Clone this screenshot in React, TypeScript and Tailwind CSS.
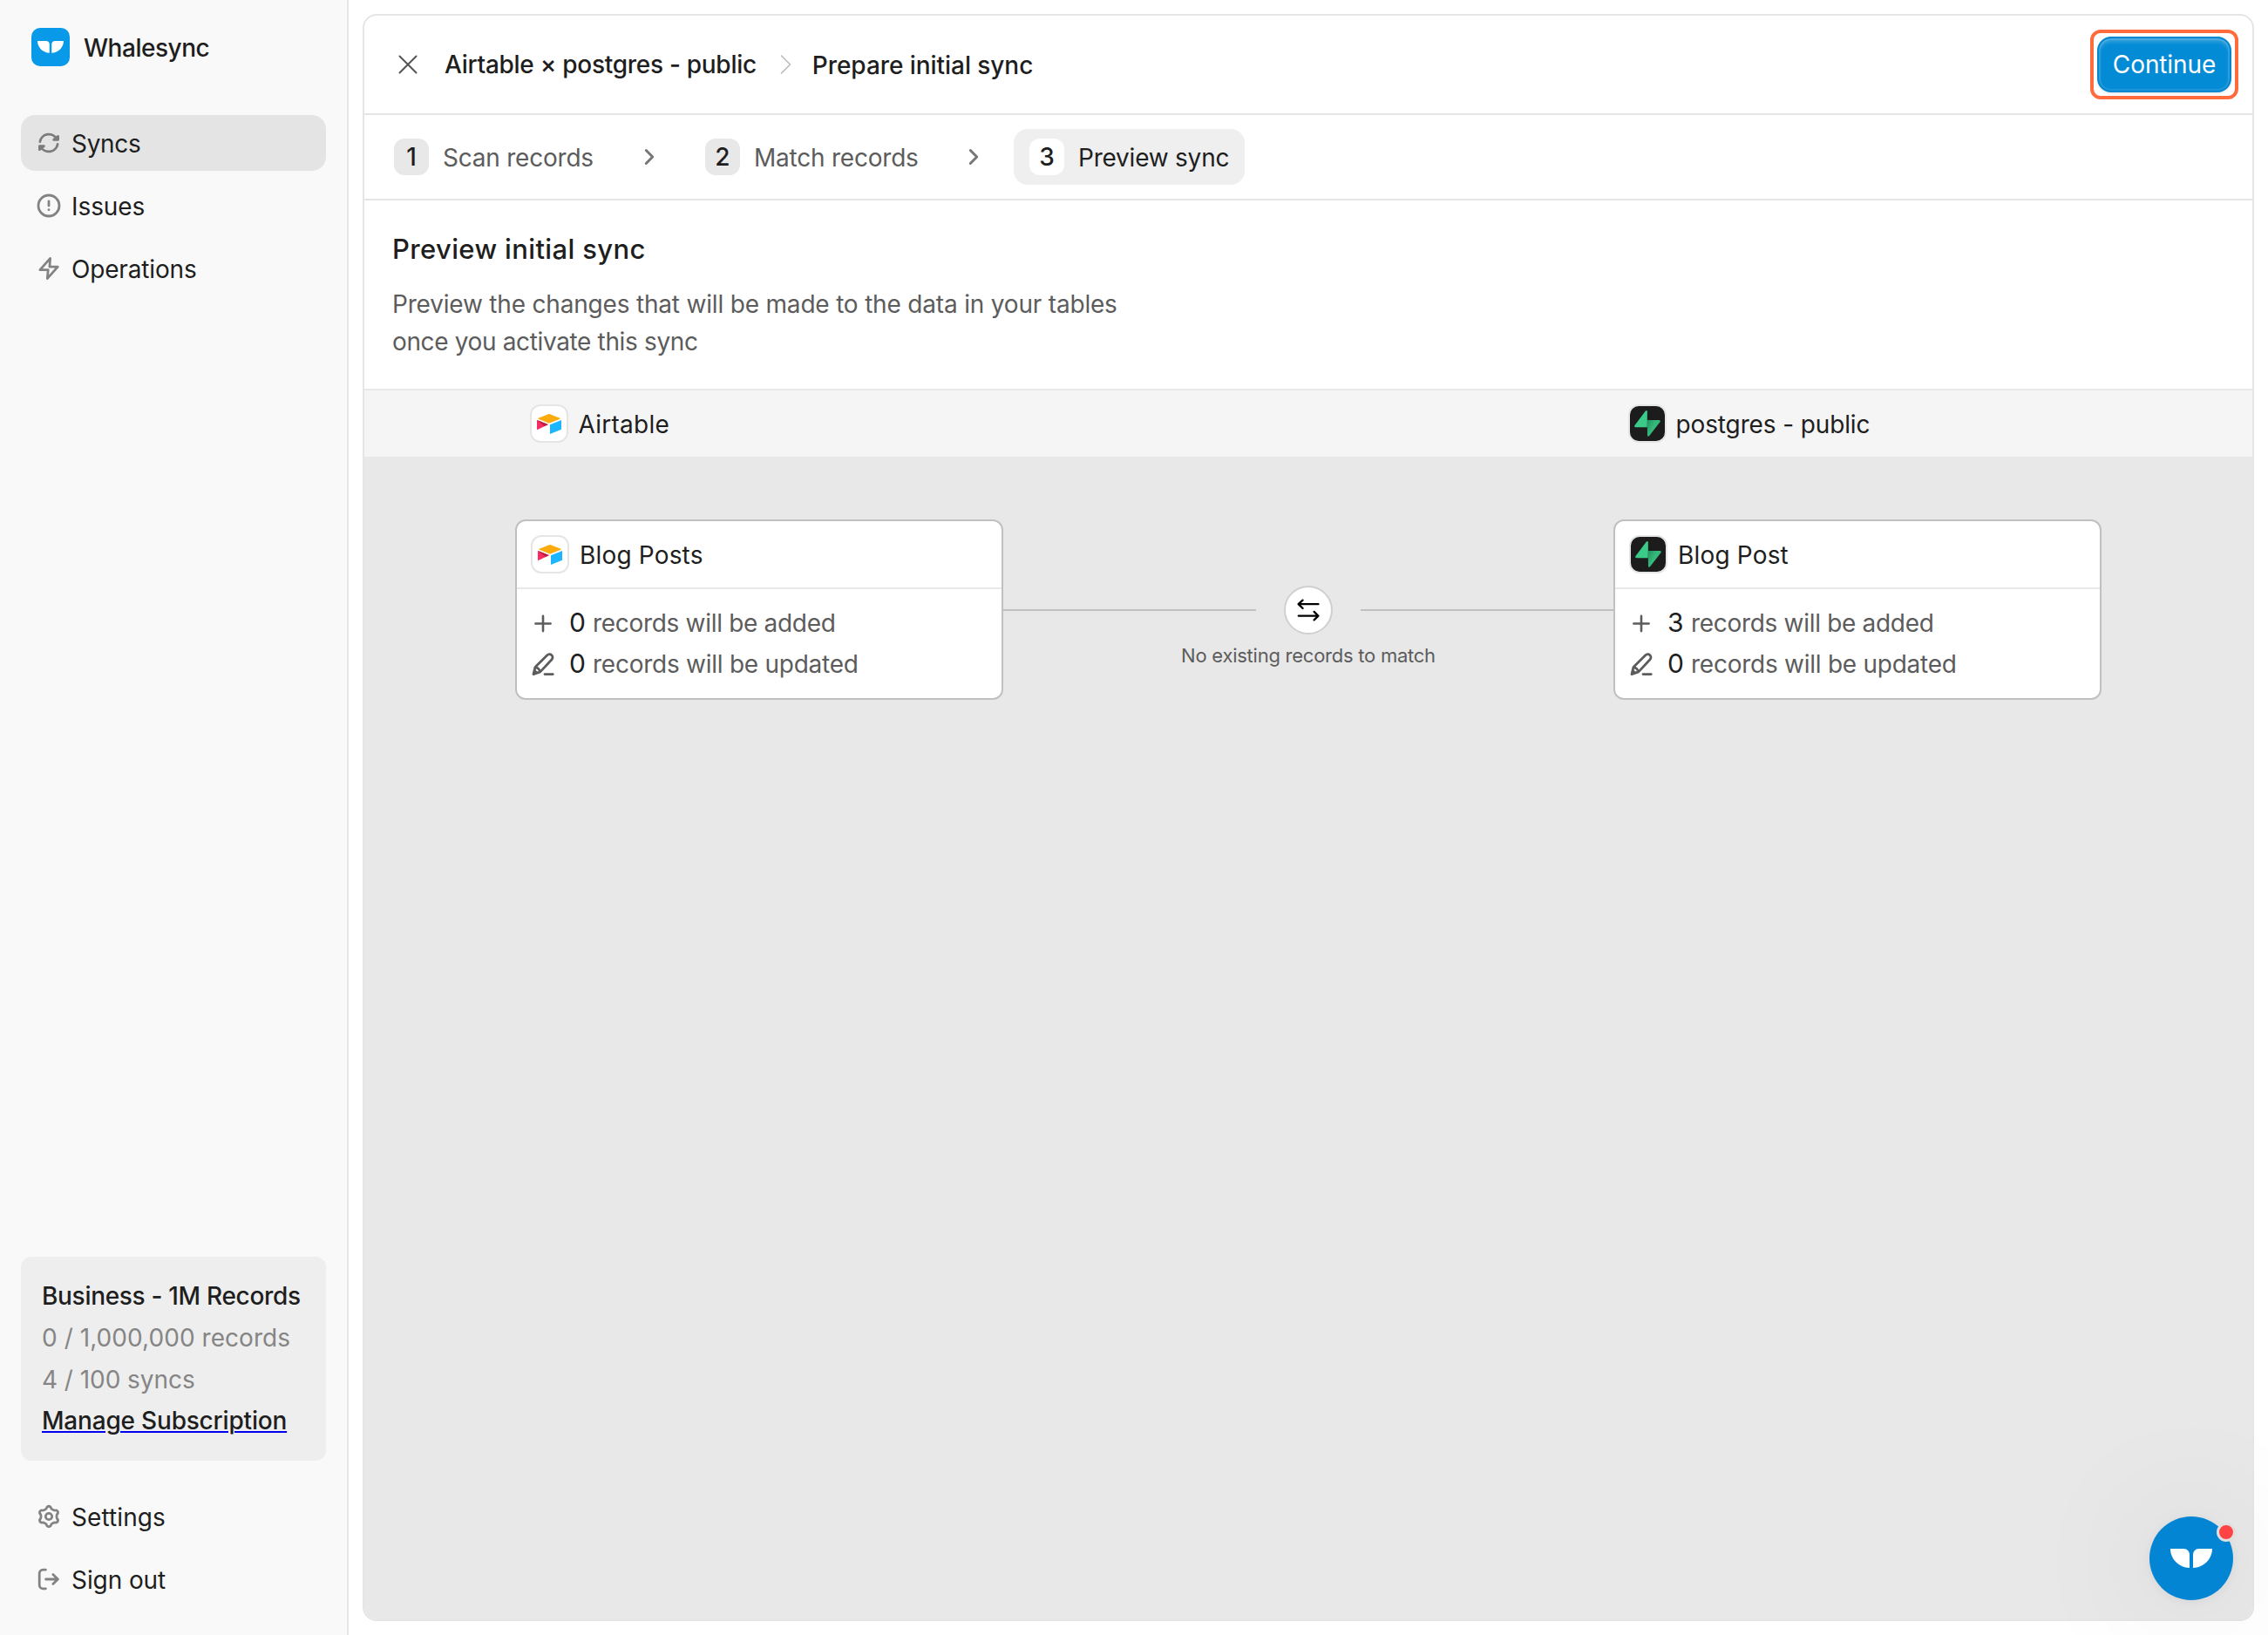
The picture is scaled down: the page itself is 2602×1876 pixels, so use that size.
import type { ReactNode } from "react";

function Icon({ children, className = "size-7", box = "0 0 28 28" }: { children: ReactNode; className?: string; box?: string }) {
  return (
    <svg viewBox={box} className={`shrink-0 ${className}`} fill="none" stroke="currentColor" strokeWidth={2.8} strokeLinecap="round" strokeLinejoin="round">
      {children}
    </svg>
  );
}

const gearPath = (() => {
  const at = (deg: number, r: number) => {
    const a = (deg * Math.PI) / 180;
    return `${(14 + r * Math.sin(a)).toFixed(2)} ${(14 - r * Math.cos(a)).toFixed(2)}`;
  };
  let d = `M${at(-30, 9)}`;
  for (let k = 0; k < 6; k++) {
    const c = k * 60;
    d += `Q${at(c - 16, 9)} ${at(c - 11, 11)}Q${at(c, 12.6)} ${at(c + 11, 11)}Q${at(c + 16, 9)} ${at(c + 30, 9)}`;
  }
  return d + "Z";
})();

const SyncIcon = () => (
  <Icon>
    <path d="M3.9 12.6A10.3 10.3 0 0 1 23.2 9.6M24.6 6.4v3.9h-5z" />
    <path d="M24.1 15.4A10.3 10.3 0 0 1 4.8 18.4M3.4 21.6v-3.9h5z" />
  </Icon>
);
const IssueIcon = () => (
  <Icon>
    <circle cx="14" cy="14" r="12" />
    <path d="M14 9v5M14 18.6v.1" />
  </Icon>
);
const FlashIcon = () => (
  <Icon>
    <path d="M15.6 2.4 3.9 15.6h9.3l-.9 10L24.3 12.1h-9.4z" />
  </Icon>
);
const GearIcon = () => (
  <Icon>
    <path d={gearPath} />
    <circle cx="14" cy="14" r="3.7" />
  </Icon>
);
const SignOutIcon = () => (
  <Icon>
    <path d="M10.4 3.2H7.2a4 4 0 0 0-4 4v13.6a4 4 0 0 0 4 4h3.2M10.6 14H24.4M18.8 8.6l5.6 5.4-5.6 5.4" />
  </Icon>
);
const Tail = ({ className }: { className: string }) => (
  <svg viewBox="0 0 48 22" className={className} fill="white">
    <path d="M0 0H15.5A6.5 6.5 0 0 1 22 6.500V22C10 21.800 0 12 0 0Z" />
    <path d="M48 0H32.500A6.500 6.500 0 0 0 26 6.500V22C38 21.800 48 12 48 0Z" />
  </svg>
);

function AirtableLogo() {
  return (
    <div className="size-11 shrink-0 rounded-xl border-2 border-[#e5e5e5] bg-white">
      <svg viewBox="2 2 40 40" className="size-10">
        <path d="M9.600 15.700 21 11.200a2.500 2.500 0 0 1 2 0l11.400 4.500q.8.500 0 1L23 21.200a2.500 2.500 0 0 1-2 0L9.600 16.700q-.8-.5 0-1Z" fill="#fcab0e" />
        <path d="M23 23.300 36 18v10.700L23 34Z" fill="#1bb6ff" />
        <path d="M8 18v11.200L20.800 23.300Z" fill="#f82b60" />
        <path d="M8 17.800 21 23.100 16.800 25.100Z" fill="#ba1e45" />
      </svg>
    </div>
  );
}

function SupabaseLogo() {
  return (
    <div className="size-11 shrink-0 rounded-xl border-2 border-[#e5e5e5] bg-[#e5e5e5]">
      <div className="size-10 overflow-hidden rounded-[10px] bg-[#1c1c1c]">
        <svg viewBox="0 0 40 40" className="size-10">
          <defs>
            <linearGradient id="bolt" x1="20" y1="17" x2="28" y2="21" gradientUnits="userSpaceOnUse">
              <stop stopColor="#249361" />
              <stop offset="1" stopColor="#34b97b" />
            </linearGradient>
          </defs>
          <path d="M19.700 16H33.600q1.900.3 1 2L22.200 34.100q-1.700 1.600-2.200-.4Z" fill="url(#bolt)" />
          <path d="M19.700 24.200H6.500q-2.100-.4-1-2.200L17.900 5.500q1.500-1.400 2 .4Z" fill="#3bcb88" />
        </svg>
      </div>
    </div>
  );
}

function NavItem({ icon, label, active, tracking }: { icon: ReactNode; label: string; active?: boolean; tracking: string }) {
  return (
    <div className={`flex h-16 items-center gap-3 rounded-2xl pl-[18px] ${active ? "bg-[#e4e4e4] text-[#7b7b7b]" : "text-[#838383]"}`}>
      {icon}
      <span className={`pt-px text-[#1e1e1e] ${tracking}`}>{label}</span>
    </div>
  );
}

function Sidebar() {
  return (
    <aside className="flex w-[400px] shrink-0 flex-col border-r-2 border-[#e5e5e5] bg-[#f9f9f9] px-6 py-8">
      <div className="flex items-center gap-4 pl-3">
        <div className="flex size-11 items-center justify-center rounded-[10px] bg-[#0899e8]">
          <Tail className="w-[30px]" />
        </div>
        <span className="pt-0.5 font-medium tracking-[-0.017em]">Whalesync</span>
      </div>
      <nav className="mt-14 flex flex-col gap-2">
        <NavItem icon={<SyncIcon />} label="Syncs" active tracking="tracking-[-0.011em]" />
        <NavItem icon={<IssueIcon />} label="Issues" tracking="tracking-[-0.003em]" />
        <NavItem icon={<FlashIcon />} label="Operations" tracking="tracking-[-0.006em]" />
      </nav>
      <div className="mt-auto flex h-[234px] flex-col rounded-xl bg-[#eeeeee] pt-[22px] pl-6 leading-[47.750px] whitespace-nowrap text-[#858585]">
        <span className="font-medium tracking-[-0.011em] text-[#1e1e1e]">Business - 1M Records</span>
        <span className="tracking-[0.002em]">0 / 1,000,000 records</span>
        <span className="tracking-[-0.002em]">4 / 100 syncs</span>
        <a className="self-start font-medium tracking-[-0.007em] text-[#1e1e1e] underline decoration-[#0000ee] decoration-2 underline-offset-[2px]">
          Manage Subscription
        </a>
      </div>
      <div className="mt-8 flex flex-col gap-2">
        <NavItem icon={<GearIcon />} label="Settings" tracking="tracking-[0.003em]" />
        <NavItem icon={<SignOutIcon />} label="Sign out" tracking="tracking-[-0.003em]" />
      </div>
    </aside>
  );
}

function Header() {
  return (
    <header className="flex h-[114px] shrink-0 items-center border-b-2 border-[#e5e5e5] pr-4 pl-[38px] font-medium">
      <Icon className="size-6 text-[#555555]" box="0 0 24 24">
        <path d="M2.500 2.500l19 19M21.500 2.500l-19 19" strokeWidth={2} />
      </Icon>
      <span className="ml-[30px] tracking-[-0.010em]">Airtable × postgres - public</span>
      <Icon className="ml-[26px] h-6 w-3.5 text-[#bdbdbd]" box="0 0 14 24">
        <path d="M2.500 2 12.500 12 2.500 22" strokeWidth={1.700} />
      </Icon>
      <span className="ml-6 pt-0.5 tracking-[-0.002em]">Prepare initial sync</span>
      <div className="ml-auto rounded-xl border-4 border-[#ff6b3d] bg-white p-1">
        <button className="flex h-16 w-[154px] items-center justify-center rounded-2xl border-2 border-[#0486d0] bg-[#048bd5] font-normal tracking-[-0.004em] text-white shadow-[inset_0_4px_4px_rgba(255,255,255,0.22),inset_0_0_0_2px_rgba(255,255,255,0.1),0_2px_3px_rgba(0,0,0,0.08)]">
          Continue
        </button>
      </div>
    </header>
  );
}

function Step({ n, label, active, width }: { n: number; label: string; active?: boolean; width: string }) {
  return (
    <div className={`flex h-16 items-center gap-4 rounded-2xl pl-[18px] whitespace-nowrap ${width} ${active ? "bg-[#efefef]" : ""}`}>
      <span className={`flex h-[42px] w-10 items-center justify-center rounded-xl font-medium ${active ? "bg-white" : "bg-[#e8e8e8]"}`}>{n}</span>
      <span className={`pt-px tracking-[-0.008em] ${active ? "" : "text-[#5c5c5c]"}`}>{label}</span>
    </div>
  );
}

const StepArrow = () => (
  <div className="flex w-[91px] justify-center pr-px">
    <Icon className="h-5 w-3 text-[#777777]" box="0 0 12 20">
      <path d="M2.300 2.500 9.700 10 2.300 17.500" strokeWidth={3} />
    </Icon>
  </div>
);

function RecordRow({ icon, count, text, tracking }: { icon: ReactNode; count: number; text: string; tracking: string }) {
  return (
    <div className="flex h-[47px] items-center text-[#5c5c5c]">
      {icon}
      <div className="ml-4 flex items-baseline pt-px">
        <span className="w-[27px] text-[30px] leading-none text-[#1e1e1e]">{count}</span>
        <span className={tracking}>{text}</span>
      </div>
    </div>
  );
}

function TableCard({ logo, name, added, updated }: { logo: ReactNode; name: string; added: number; updated: number }) {
  return (
    <div className="h-[207px] w-[560px] shrink-0 rounded-xl border-2 border-[#c0c0c0] bg-white">
      <div className="flex h-[78px] items-center gap-3 border-b-2 border-[#e8e8e8] pl-4">
        {logo}
        <span className="pt-px tracking-[0.006em]">{name}</span>
      </div>
      <div className="pt-[15px] pl-4">
        <RecordRow
          count={added}
          text="records will be added"
          tracking="tracking-[-0.011em]"
          icon={
            <Icon>
              <path d="M14 5.900v17.200M5.400 14.500h17.200" strokeWidth={2.600} />
            </Icon>
          }
        />
        <RecordRow
          count={updated}
          text="records will be updated"
          tracking="tracking-[-0.009em]"
          icon={
            <Icon>
              <path d="M3 25.600 5 17.400 18.800 3.800a3.500 3.500 0 0 1 5.200 5L10.800 22.900 3 25.600ZM5 17.600q4.600.8 5.600 5.200M16 25.600h9.300" />
              <path d="M3.200 25.400 4.600 20.400 8 23.700Z" fill="currentColor" strokeWidth={1} />
            </Icon>
          }
        />
      </div>
    </div>
  );
}

export default function App() {
  return (
    <div className="relative flex h-[1876px] w-[2602px] overflow-hidden bg-white font-['Inter',sans-serif] text-[28px] leading-10 text-[#1e1e1e]">
      <Sidebar />
      <main className="my-4 mr-4 ml-4 flex flex-1 flex-col overflow-hidden rounded-2xl border-2 border-[#e5e5e5]">
        <Header />
        <div className="flex h-[98px] shrink-0 items-center border-b-2 border-[#e5e5e5] pl-4">
          <Step n={1} label="Scan records" width="w-[266px]" />
          <StepArrow />
          <Step n={2} label="Match records" width="w-[281px]" />
          <StepArrow />
          <Step n={3} label="Preview sync" width="w-[265px]" active />
        </div>
        <section className="h-[218px] shrink-0 border-b-2 border-[#e8e8e8] pt-9 pl-8">
          <h1 className="text-[31px] font-medium tracking-[0.0116em]">Preview initial sync</h1>
          <p className="mt-[22px] leading-[43px] tracking-[-0.0067em] text-[#5c5c5c]">
            Preview the changes that will be made to the data in your tables
            <br />
            <span className="tracking-[-0.0127em]">once you activate this sync</span>
          </p>
        </section>
        <div className="flex h-[76px] shrink-0 items-center justify-center bg-[#f5f5f5]">
          <div className="flex w-[1787px] items-center">
            <div className="flex w-[1260px] items-center gap-3">
              <AirtableLogo />
              <span className="pt-px tracking-[0.009em]">Airtable</span>
            </div>
            <div className="flex items-center gap-[11px]">
              <SupabaseLogo />
              <span className="pt-px tracking-[-0.0044em]">postgres - public</span>
            </div>
          </div>
        </div>
        <div className="flex flex-1 items-start justify-center bg-[#e8e8e8] pt-[72px]">
          <TableCard logo={<AirtableLogo />} name="Blog Posts" added={0} updated={0} />
          <div className="flex w-[700px] flex-col items-center pt-[76px]">
            <div className="flex w-full items-center justify-between">
              <div className="h-0.5 w-[290px] bg-[#c0c0c0]" />
              <div className="flex size-14 items-center justify-center rounded-full border-2 border-[#d0d0d0] bg-white text-black">
                <Icon>
                  <path d="M25.500 7.200H2.800M7.600 2.700 2.600 7.200 7.600 12M2.800 20.700H25.500M20.600 15.900 25.500 20.700 20.600 25.400" strokeWidth={2.300} />
                </Icon>
              </div>
              <div className="h-0.5 w-[290px] bg-[#c0c0c0]" />
            </div>
            <span className="mt-2 text-[22px] leading-8 tracking-[-0.0112em] text-[#5c5c5c]">No existing records to match</span>
          </div>
          <TableCard logo={<SupabaseLogo />} name="Blog Post" added={3} updated={0} />
        </div>
      </main>
      <div className="absolute right-10 bottom-10 flex size-24 items-center justify-center rounded-full bg-[#0485d4] shadow-[0_2px_12px_rgba(0,0,0,0.06),0_4px_160px_rgba(0,0,0,0.12)]">
        <Tail className="w-12" />
        <span className="absolute top-[7px] -right-[3px] size-[22px] rounded-full border-3 border-[#dfdfdf] bg-[#ff4344]" />
      </div>
    </div>
  );
}
